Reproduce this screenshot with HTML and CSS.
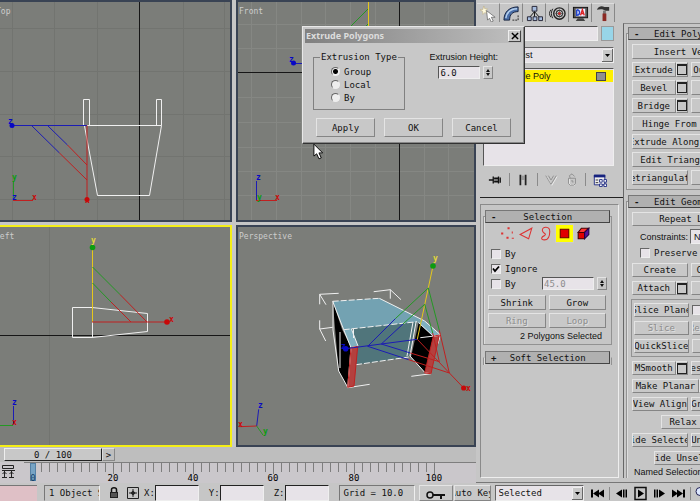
FILE: index.html
```html
<!DOCTYPE html>
<html lang="en">
<head>
<meta charset="UTF-8">
<meta name="viewport" content="width=device-width, initial-scale=1.0">
<title>Extrude Polygons</title>
<link rel="stylesheet" href="styles.css">
</head>

<body>

<div class="app">

<!-- VIEWPORTS -->
<main class="workspace">
<div class="viewports">

<div class="viewport cut">
<svg viewBox="0 2 230 218" preserveAspectRatio="xMidYMid slice">
  <path class="grid" d="M12.5 2V220M54.5 2V220M97.5 2V220M183.5 2V220M224.5 2V220M0 28.5H230M0 71.5H230M0 114.5H230M0 156.5H230M0 199.5H230"/>
  <path class="origin" d="M139.5 2V220"/>
  <text class="view-name" x="-4" y="14">Top</text>
  <path class="wire" d="M83.5 125.5V99.5H89.5V125.5M156.5 125.5V99.5H161.5V125.5M83.5 125.5H161.5L149.5 195.5H97.5L84.5 126"/>
  <path class="blue" d="M12 125.5H87M32 126L59.5 153M48 126L67.5 145"/>
  <path class="red" d="M87 125.5V199M59.5 153L87 180M67.5 145L87 165"/>
  <circle class="blue-dot" cx="12" cy="125.5" r="2.5"/>
  <circle class="red-dot" cx="87" cy="199.5" r="2.5"/>
  <text class="tz" x="8" y="124">z</text>
  <text class="tx" x="85" y="203">x</text>
  <path class="green" d="M13.5 201V182"/>
  <path class="red" d="M13 200.5H33"/>
  <text class="ty" x="12" y="180">y</text>
  <text class="tz" x="12" y="200">z</text>
  <text class="tx" x="32" y="200">x</text>
</svg>
</div>

<div class="viewport">
<svg viewBox="238 2 236 218" preserveAspectRatio="xMidYMid slice">
  <path class="grid light" d="M251.5 2V220M276.5 2V220M301.5 2V220M325.5 2V220M350.5 2V220M375.5 2V220M424.5 2V220M448.5 2V220M238 24.5H474M238 48.5H474M238 97.5H474M238 122.5H474M238 147.5H474M238 171.5H474M238 195.5H474"/>
  <path class="origin" d="M399.5 2V220M238 72.5H474"/>
  <text class="view-name" x="239" y="14">Front</text>
  <path class="yellow" d="M368.5 2V63"/>
  <path class="green" d="M368 9L340 37M368 24L355 37"/>
  <path class="blue" d="M293 63.5H368"/>
  <circle class="blue-dot" cx="293.5" cy="63" r="2.5"/>
  <text class="tz" x="289" y="62">z</text>
  <path class="blue" d="M256.5 201V181"/>
  <path class="red" d="M256 200.5H277"/>
  <text class="tz" x="256" y="180">z</text>
  <text class="ty" x="257" y="200">y</text>
  <text class="tx" x="275" y="200">x</text>
</svg>
</div>

<div class="viewport cut active">
<svg viewBox="0 227 230 218" preserveAspectRatio="xMidYMid slice">
  <path class="grid" d="M49.5 227V445"/>
  <path class="origin" d="M0 335.5H230"/>
  <text class="view-name" x="-5" y="239">Left</text>
  <path class="wire" d="M72.5 307.5H92L147.5 313.5V331.5L92 337.5H72.5ZM92.5 322V337"/>
  <path class="yellow" d="M92.5 247V322"/>
  <path class="green" d="M92.5 267L120 294.5M92.5 283L111 302"/>
  <path class="red" d="M92 322H167M120 294.5L147 322M111 302L131 322"/>
  <circle class="green-dot" cx="92.5" cy="247.5" r="2.8"/>
  <circle class="red-dot" cx="167" cy="322" r="2.8"/>
  <text class="tyy" x="91" y="243">y</text>
  <text class="tx" x="169" y="322">x</text>
  <path class="blue" d="M13.5 425V406"/>
  <path class="green" d="M0 425.5H13"/>
  <text class="tz" x="12" y="405">z</text>
  <text class="tx" x="12" y="425">x</text>
</svg>
</div>

<div class="viewport">
<svg viewBox="238 227 236 218" preserveAspectRatio="xMidYMid slice">
  <text class="view-name" x="239" y="239">Perspective</text>
  <path class="bracket" d="M319.7 304.3V294.3L338.7 293.3M319.7 294.3L326 304.7M373.7 291.7L390.3 289.7V298.7M390.3 289.7L401 299.7M319.7 320.3V329L332.7 327.3M319.7 329L325.7 341M347.7 387.7L369.7 384.3M411.3 376.3L431 373.7"/>
  <path fill="#50757b" d="M343.7 329.7L417 321.7L408.7 357L356 364.7Z"/>
  <path fill="#73a2b2" d="M332.7 301.3L379.3 298.3L424.7 321L343.7 329.7Z"/>
  <path fill="#000" d="M332.7 301.3L342 329.3L351.3 347.7L347.7 387.3L338.7 371ZM418.7 322.7L433.3 336L425.3 373L411 357Z"/>
  <path fill="#7fb0bf" d="M343.7 329.7L351.3 328.7L358 346L351 347.7ZM417 321.7L424.7 321L440.3 334.7L433.3 336.3Z"/>
  <path fill="#b4403e" d="M351 347.7L357.7 346.3L354 386L347.7 387.3ZM433.3 336.3L439.3 335L431 373.7L424.7 373Z"/>
  <path class="edge dash" d="M332.7 301.3L379.3 298.3M343.7 329.7L417 321.7M356 364.7L408.7 357"/>
  <path class="edge" d="M379.3 298.3L424.7 321L440.3 334.7L433.3 336.3L418.7 322.7M332.7 301.3L343.7 329.7L351 347.7L347.7 387.3L338.7 371L333 330V301.3M340 332V368M351.3 328.7L358 346L351 347.7M353.5 329V338M413 322L407 356M416 322L410 356L425.3 373L431 373.7M420.3 337.7L440.3 335.3L438 343.7"/>
  <path class="red" d="M351 347.7L357.7 346.3L354 386L347.7 387.3ZM433.3 336.3L439.3 335L431 373.7L424.7 373Z"/>
  <path class="yellow" d="M417.3 339.3L433 266"/>
  <path class="green" d="M428.3 288L395.3 318.7M424.7 304.3L403 324M428.3 288L439.3 330.3M424.7 304.3L432.7 333"/>
  <path class="blue" d="M417.3 339.3L381.3 344L345.7 348.7M395.3 318.7L367.7 346.3L408.7 359.7M403 324L381.3 344L410.3 353"/>
  <path class="red" d="M417.3 339.3L463.7 388M439.3 330.3L449.3 373L408.7 359.7M432.7 333L439.3 361.7L410.3 353"/>
  <circle class="green-dot" cx="433" cy="266" r="2.8"/>
  <circle class="blue-dot" cx="345.7" cy="348.7" r="2.8"/>
  <circle class="red-dot" cx="463.7" cy="388" r="2.6"/>
  <text class="tyy" x="433" y="261">y</text>
  <text class="tz" x="341" y="349">z</text>
  <text class="tx" x="466" y="391">x</text>
  <path class="blue" d="M256.7 426L258.7 409.3"/>
  <path class="red" d="M256.7 426L239.3 426.7"/>
  <path class="green" d="M256.7 426L263 435"/>
  <text class="tz" x="258" y="408">z</text>
  <text class="tx" x="238" y="427">x</text>
  <text class="ty" x="263" y="434">y</text>
</svg>
</div>

</div>

<div class="time-slider">
  <button class="time-thumb">0 / 100</button>
  <button class="time-next">&gt;</button>
</div>

<div class="timeline">
<svg viewBox="0 0 476 21" preserveAspectRatio="xMinYMid meet">
  <path fill="none" stroke="#222" d="M2.5 3.5H13.5V6.5H2.5ZM2 8.5H15M4.5 9V15M11.5 9V15M2.5 12L4.5 10L6.5 12M9.5 12L11.5 10L13.5 12M2 15.5H7M9 15.5H14"/>
  <path fill="none" stroke="#7e7e7e" d="M24 .5H476M41.5 1V10M49.5 1V10M57.5 1V10M65.5 1V10M73.5 1V10M81.5 1V10M89.5 1V10M97.5 1V10M105.5 1V10M113.5 1V12M121.5 1V10M129.5 1V10M137.5 1V10M145.5 1V10M153.5 1V10M161.5 1V10M169.5 1V10M177.5 1V10M185.5 1V10M193.5 1V12M201.5 1V10M209.5 1V10M217.5 1V10M225.5 1V10M233.5 1V10M241.5 1V10M249.5 1V10M257.5 1V10M265.5 1V10M273.5 1V12M281.5 1V10M289.5 1V10M297.5 1V10M305.5 1V10M313.5 1V10M322.5 1V10M330.5 1V10M338.5 1V10M346.5 1V10M354.5 1V12M362.5 1V10M370.5 1V10M378.5 1V10M386.5 1V10M394.5 1V10M402.5 1V10M410.5 1V10M418.5 1V10M426.5 1V10M434.5 1V12"/>
  <rect x="30.5" y="1.5" width="5" height="17" fill="#76a3c4" stroke="#5480a4"/>
  <text class="tick" x="33" y="19" fill="#17436b">0</text>
  <text class="tick" x="113" y="19">20</text>
  <text class="tick" x="193" y="19">40</text>
  <text class="tick" x="273" y="19">60</text>
  <text class="tick" x="354" y="19">80</text>
  <text class="tick" x="434" y="19">100</text>
</svg>
</div>
</main>

<!-- COMMAND PANEL -->
<aside class="command">

<nav class="tabs">
  <button class="tab" aria-label="Create"><svg viewBox="0 0 18 18"><path d="M4 1L5 4L8 4L6 6L8 9L5 8L3 10L3 7L0 5L3 5Z" fill="#fffbe0" stroke="#bba870" stroke-width=".5"/><path d="M7 6L16 13H12L14 17L12 18L10 14L8 16Z" fill="#fff" stroke="#555" stroke-width=".7"/></svg></button>
  <button class="tab" aria-label="Modify"><svg viewBox="0 0 18 18"><path d="M1 16C1 7 7 2 16 2V7C10 7 7 10 7 16Z" fill="#4a6ea8" stroke="#14213e"/><path d="M3 14C4 8 8 4 15 4" stroke="#b5d0ee" fill="none" stroke-width="1.5"/><path d="M10 16H16V10" stroke="#222" fill="none" stroke-dasharray="2 1"/></svg></button>
  <button class="tab" aria-label="Hierarchy"><svg viewBox="0 0 18 18"><path d="M9 4V14M9 7L3 14M9 7L15 14" stroke="#111"/><path d="M6.5 1.5H11.5V6.5H6.5ZM1.5 12.5H5.5V16.5H1.5ZM7.5 12.5H11.5V16.5H7.5ZM13.5 12.5H17.5V16.5H13.5Z" fill="#a7bddf" stroke="#223"/></svg></button>
  <button class="tab" aria-label="Motion"><svg viewBox="0 0 18 18"><g fill="none" stroke="#222"><circle cx="11" cy="9" r="6" stroke-width="1.5"/><circle cx="11" cy="9" r="3.5" fill="#ccc"/><path d="M11 5V13M7 9H15M8 6L14 12M14 6L8 12" stroke-width=".6"/><path d="M4 4C2 7 2 11 4 14M2 5C0 8 0 10 2 13"/></g><circle cx="11" cy="9" r="1.3" fill="#d22"/></svg></button>
  <button class="tab" aria-label="Display"><svg viewBox="0 0 18 18"><rect x="1.5" y="2.5" width="15" height="11" fill="#555" stroke="#111"/><rect x="4" y="4" width="10" height="8" fill="#eef"/><path d="M5 5V11C9 11 9 5 5 5" fill="none" stroke="#24c" stroke-width="1.5"/><path d="M9 11L11 5L13 11M10 9H13" fill="none" stroke="#d22" stroke-width="1.5"/><path d="M6 14H12L14 17H4Z" fill="#444"/></svg></button>
  <button class="tab" aria-label="Utilities"><svg viewBox="0 0 18 18"><path d="M2 5C4 1 7 1 10 2H15V6H11L9 5C6 4 4 5 2 5Z" fill="#333"/><path d="M8.5 6H11.5V10H8.5Z" fill="#777"/><path d="M8 9H12V17H8Z" fill="#8c2a24"/></svg></button>
</nav>

<div class="columns">

<section class="modify">
  <div class="name-row">
    <input class="field" type="text" aria-label="Object name">
    <button class="swatch" aria-label="Object color"></button>
  </div>
  <select class="combo" aria-label="Modifier List"><option>Modifier List</option></select>
  <div class="stack">
    <div class="stack-item"><span>Editable Poly</span><i class="stack-box"></i></div>
  </div>
  <div class="stack-tools">
    <button aria-label="Pin Stack"><svg viewBox="0 0 16 16"><path d="M1 8H6M6 4V12M7 6H12V10H7M12 4V12M14 5V11" stroke="#111" stroke-width="1.5" fill="#777"/></svg></button>
    <i class="sep"></i>
    <button aria-label="Show end result"><svg viewBox="0 0 16 16"><path d="M5 2V14M11 2V14" stroke="#222" stroke-width="2"/><path d="M7 3V8M9 3V8" stroke="#777"/></svg></button>
    <i class="sep"></i>
    <button aria-label="Make unique"><svg viewBox="0 0 16 16"><path d="M3 4L9 14L15 4" stroke="#eee" fill="none"/><path d="M2 3L8 13L14 3M5 3L8 8L11 3" stroke="#8c8c8c" fill="none"/></svg></button>
    <button aria-label="Remove modifier"><svg viewBox="0 0 16 16"><path d="M5 7V12L7 14H11" stroke="#eee" fill="none"/><path d="M4 6H12V12L10 14H6L4 12ZM6 6L5 3L8 1L11 4M7 9H9V11" stroke="#8c8c8c" fill="none"/></svg></button>
    <i class="sep"></i>
    <button aria-label="Configure sets"><svg viewBox="0 0 16 16"><path d="M1.5 2.5H13.5V13.5H1.5Z" fill="#eee" stroke="#16227f"/><path d="M1 2H14V5H1Z" fill="#16227f"/><path d="M3 8H6M3 11H6" stroke="#222"/><path d="M7.5 7.5H10.5V10.5H7.5ZM12.5 7.5H15.5V10.5H12.5ZM7.5 12.5H10.5V15.5H7.5ZM12.5 12.5H15.5V15.5H12.5Z" fill="#fff" stroke="#16227f"/></svg></button>
  </div>

  <div class="rollouts">
    <section class="rollout">
      <button class="rollout-head"><b>-</b><span>Selection</span></button>
      <div class="sub-objects">
        <button aria-label="Vertex"><svg viewBox="0 0 16 16"><path d="M2 7H4V9H2ZM8 2H10V4H8ZM12 6H13V8H12ZM7 11H9V13H7ZM12 12H14V13H12Z" fill="#d33"/></svg></button>
        <button aria-label="Edge"><svg viewBox="0 0 16 16"><path d="M2 9L13 3L10 13Z" fill="none" stroke="#d33"/></svg></button>
        <button aria-label="Border"><svg viewBox="0 0 16 16"><path d="M5 5C5 1 12 1 12 6C12 11 10 14 7 14C3 14 4 11 7 10C10 8 5 8 5 5Z" fill="none" stroke="#d33"/></svg></button>
        <button class="on" aria-label="Polygon"><svg viewBox="0 0 16 16"><path d="M4 4H12V12H4Z" fill="#e00000" stroke="#600"/></svg></button>
        <button aria-label="Element"><svg viewBox="0 0 16 16"><path d="M3 7H9V13H3Z" fill="#e00000" stroke="#400"/><path d="M3 7L6 3H13L9 7Z" fill="#f33" stroke="#400"/><path d="M9 7L13 3V9L9 13Z" fill="#551299" stroke="#204"/></svg></button>
      </div>
      <label class="check"><input type="checkbox">By</label>
      <label class="check"><input type="checkbox" checked>Ignore</label>
      <div class="angle-row">
        <label class="check"><input type="checkbox">By</label>
        <span class="spinner"><input class="field" type="text" value="45.0" aria-label="Angle" disabled><button class="spin" aria-label="Adjust angle"></button></span>
      </div>
      <div class="pair">
        <button class="btn">Shrink</button>
        <button class="btn">Grow</button>
        <button class="btn" disabled>Ring</button>
        <button class="btn" disabled>Loop</button>
      </div>
      <p class="summary">2 Polygons Selected</p>
    </section>
    <section class="rollout closed">
      <button class="rollout-head"><b>+</b><span>Soft Selection</span></button>
    </section>
  </div>
</section>

<section class="edit">
  <section class="rollout">
    <button class="rollout-head"><b>-</b><span>Edit Polygons</span></button>
    <div class="rows">
      <div class="row"><button class="btn">Insert Vertex</button></div>
      <div class="row two"><span><button class="btn">Extrude</button><button class="btn opt" aria-label="Extrude settings"></button></span><span><button class="btn">Outline</button><button class="btn opt" aria-label="Outline settings"></button></span></div>
      <div class="row two"><span><button class="btn">Bevel</button><button class="btn opt" aria-label="Bevel settings"></button></span><span><button class="btn">Inset</button></span></div>
      <div class="row two"><span><button class="btn">Bridge</button><button class="btn opt" aria-label="Bridge settings"></button></span><span><button class="btn">Flip</button></span></div>
      <div class="row"><button class="btn">Hinge From Edge</button><button class="btn opt" aria-label="Hinge settings"></button></div>
      <div class="row"><button class="btn">Extrude Along Spline</button><button class="btn opt" aria-label="Spline settings"></button></div>
      <div class="row"><button class="btn">Edit Triangulation</button></div>
      <div class="row two"><span><button class="btn">Retriangulate</button></span><span><button class="btn">Turn</button></span></div>
    </div>
  </section>

  <section class="rollout geometry">
    <button class="rollout-head"><b>-</b><span>Edit Geometry</span></button>
    <div class="rows">
      <div class="row"><button class="btn">Repeat Last</button></div>
      <div class="row constraints"><label for="constraints">Constraints:</label><select class="combo" id="constraints"><option>None</option></select></div>
      <div class="row preserve"><label class="check"><input type="checkbox">Preserve UVs</label></div>
      <div class="row two"><span><button class="btn">Create</button></span><span><button class="btn">Collapse</button></span></div>
      <div class="row two"><span><button class="btn">Attach</button><button class="btn opt" aria-label="Attach list"></button></span><span><button class="btn">Detach</button></span></div>
      <div class="slice">
        <div class="row two"><span><button class="btn">Slice Plane</button></span><label class="check"><input type="checkbox">Split</label></div>
        <div class="row two"><span><button class="btn" disabled>Slice</button></span><span><button class="btn" disabled>Reset Plane</button></span></div>
        <div class="row two"><span><button class="btn">QuickSlice</button></span><span><button class="btn">Cut</button></span></div>
      </div>
      <div class="row two"><span><button class="btn">MSmooth</button><button class="btn opt" aria-label="MSmooth settings"></button></span><span><button class="btn">Tessellate</button><button class="btn opt" aria-label="Tessellate settings"></button></span></div>
      <div class="row planar"><button class="btn">Make Planar</button><button class="btn">X</button><button class="btn">Y</button><button class="btn">Z</button></div>
      <div class="row two"><span><button class="btn">View Align</button></span><span><button class="btn">Grid Align</button></span></div>
      <div class="row relax"><button class="btn">Relax</button><button class="btn opt" aria-label="Relax settings"></button></div>
      <div class="row two"><span><button class="btn">Hide Selected</button></span><span><button class="btn">Unhide All</button></span></div>
      <div class="row unselected"><button class="btn">Hide Unselected</button></div>
      <p class="named">Named Selections:</p>
    </div>
  </section>
</section>

</div>
</aside>

<!-- STATUS BAR -->
<footer class="status">
  <div class="listener"></div>
  <output class="prompt">1 Object Selected</output>
  <button class="icon lock" aria-label="Lock selection"><svg viewBox="0 0 12 14"><path d="M3.5 7V3.5C3.5 1 8.5 1 8.5 3.5V7" fill="none" stroke="#111" stroke-width="1.5"/><path d="M2 6H10V12H2Z" fill="#222"/><path d="M3 8H9M3 10H9" stroke="#888"/></svg></button>
  <button class="icon" aria-label="Transform type-in"><svg viewBox="0 0 14 14"><path d="M1.5 1.5H12.5V12.5H1.5ZM7 3V11M3 7H11" fill="none" stroke="#222"/><path d="M7 4.5L9.5 7L7 9.5L4.5 7Z" fill="#222"/></svg></button>
  <label class="coord">X:<input class="field" type="text"></label>
  <label class="coord">Y:<input class="field" type="text"></label>
  <label class="coord">Z:<input class="field" type="text"></label>
  <output class="grid-size">Grid = 10.0</output>
  <button class="btn key" aria-label="Set keys"><svg viewBox="0 0 22 12"><path d="M8 8H20M16 8V12" stroke="#111" stroke-width="2"/><circle cx="5" cy="8" r="3" fill="none" stroke="#111" stroke-width="1.5"/></svg></button>
  <button class="btn auto">Auto Key</button>
  <select class="combo" aria-label="Key filter"><option>Selected</option></select>
  <div class="playback">
    <button aria-label="Go to start"><svg viewBox="0 0 15 12"><path d="M1 2H3V10H1ZM9 2V10L3 6ZM14 2V10L8 6Z"/></svg></button>
    <i class="sep"></i>
    <button aria-label="Previous frame"><svg viewBox="0 0 15 12"><path d="M8 2V10L2 6ZM9 2H10.5V10H9ZM11.5 2H13V10H11.5Z"/></svg></button>
    <button aria-label="Play"><svg viewBox="0 0 15 15"><path d="M2 1.5H13V13.5H2Z" fill="none" stroke="#111" stroke-width="1.5"/><path d="M5 3.5L11 7.5L5 11.5Z"/></svg></button>
    <button aria-label="Next frame"><svg viewBox="0 0 15 12"><path d="M2 2H3.5V10H2ZM4.5 2H6V10H4.5ZM7 2L13 6L7 10Z"/></svg></button>
    <button aria-label="Go to end"><svg viewBox="0 0 15 12"><path d="M1 2L7 6L1 10ZM6 2L12 6L6 10ZM12 2H14V10H12Z"/></svg></button>
    <i class="sep"></i>
    <button aria-label="Zoom"><svg viewBox="0 0 15 14"><circle cx="5" cy="5" r="4" fill="#dde8ff" stroke="#225"/><path d="M8 8L13 13" stroke="#225" stroke-width="2"/></svg></button>
  </div>
</footer>

</div>

<!-- EXTRUDE DIALOG -->
<div class="dialog" role="dialog" aria-labelledby="dialogTitle">
  <div class="title-bar"><h1 id="dialogTitle">Extrude Polygons</h1><button class="close" aria-label="Close"><svg viewBox="0 0 9 9"><path d="M1 1L8 8M8 1L1 8" stroke="#000" stroke-width="1.6"/></svg></button></div>
  <div class="dialog-body">
    <fieldset>
      <legend>Extrusion Type</legend>
      <label><input type="radio" name="type" checked>Group</label>
      <label><input type="radio" name="type">Local</label>
      <label><input type="radio" name="type">By</label>
    </fieldset>
    <div class="height-field">
      <label for="height">Extrusion Height:</label>
      <span class="spinner"><input class="field" type="text" id="height" value="6.0"><button class="spin" aria-label="Adjust height"></button></span>
    </div>
  </div>
  <div class="dialog-buttons">
    <button class="btn">Apply</button>
    <button class="btn">OK</button>
    <button class="btn">Cancel</button>
  </div>
</div>

<svg class="cursor" viewBox="0 0 12 18"><path d="M1 1V14L4 11.5L6.5 17L9 16L6.5 10.5H10.5Z" fill="#fff" stroke="#000"/></svg>

</body>
</html>
```
FILE: styles.css
```css
*{
    box-sizing:border-box;
}

body{
    margin:0;
    background:#c6c6c6;
    color:#111;
    overflow:hidden;
    font:9px/12px "DejaVu Sans Mono", monospace;
}

button, input, select{
    font:inherit;
    color:inherit;
    margin:0;
    padding:0;
    border:0;
    border-radius:0;
    background:none;
    appearance:none;
}

svg{
    display:block;
}

p{
    margin:0;
}

.app{
    display:grid;
    grid-template-columns:minmax(0,1fr) 224px;
    grid-template-rows:minmax(0,1fr) 18px;
    height:100vh;
}

/* SHARED CONTROLS */
.btn{
    display:flex;
    flex:1;
    min-width:0;
    align-items:center;
    justify-content:center;
    overflow:hidden;
    white-space:nowrap;
    border:1px solid;
    border-color:#e4e4e4 #858585 #858585 #e4e4e4;
    background:#c8c8c8;
}

.btn:disabled{
    color:#8c8c8c;
    text-shadow:1px 1px #e0e0e0;
}

.opt{
    flex:0 0 12px;
}

.opt::before{
    content:"";
    width:8px;
    height:8px;
    border:1px solid #222;
    border-top-width:2px;
}

.field{
    min-width:0;
    background:#e7e3e8;
    border:1px solid;
    border-color:#555 #eee #eee #555;
}

.field:disabled{
    color:#8c8c8c;
}

.combo{
    padding-left:3px;
    border:1px solid;
    border-color:#666 #eee #eee #666;
    background:#e7e3e8 url("data:image/svg+xml,%3Csvg xmlns='http://www.w3.org/2000/svg' width='11' height='13'%3E%3Cpath d='M0 0H11V13H0Z' fill='%23c8c8c8'/%3E%3Cpath d='M.5 13V.5H11' fill='none' stroke='%23eee'/%3E%3Cpath d='M0 12.5H10.5V0' fill='none' stroke='%23666'/%3E%3Cpath d='M3 5H8L5.5 8Z'/%3E%3C/svg%3E") no-repeat right center;
}

.sep{
    width:1px;
    height:13px;
    background:#8a8a8a;
}

.spinner{
    display:flex;
    gap:3px;
}

.spin{
    display:flex;
    flex:none;
    flex-direction:column;
    align-items:center;
    justify-content:space-evenly;
    width:10px;
    height:13px;
    border:1px solid;
    border-color:#e4e4e4 #858585 #858585 #e4e4e4;
}

.spin::before, .spin::after{
    content:"";
    border:2px solid transparent;
    border-top-width:0;
    border-bottom:3px solid #111;
}

.spin::after{
    transform:rotate(180deg);
}

.check{
    display:flex;
    align-items:center;
    gap:4px;
    white-space:nowrap;
}

.check input{
    flex:none;
    width:10px;
    height:10px;
    background:#e7e3e8;
    border:1px solid;
    border-color:#666 #eee #eee #666;
}

.check input:checked{
    background:#e7e3e8 url("data:image/svg+xml,%3Csvg xmlns='http://www.w3.org/2000/svg' width='8' height='8'%3E%3Cpath d='M1 3.5L3 6L7 1.5' fill='none' stroke='%23000' stroke-width='1.8'/%3E%3C/svg%3E") center no-repeat;
}

/* VIEWPORTS */
.workspace{
    display:flex;
    flex-direction:column;
    min-height:0;
}

.viewports{
    flex:1;
    min-height:0;
    display:grid;
    grid-template-columns:232fr 240fr;
    grid-template-rows:minmax(0,1fr) minmax(0,1fr);
    gap:3px 4px;
}

.viewport{
    min-width:0;
    border:2px solid #394354;
    background:#7b7d79;
}

.viewport.cut{
    border-left:0;
}

.viewport.active{
    border-color:#f4ee17;
}

.viewport svg{
    width:100%;
    height:100%;
}

.viewport text{
    font-size:8px;
    font-weight:bold;
}

.viewport .view-name{
    fill:#cdcdcd;
    font-weight:normal;
}

.grid{stroke:#727470;}
.grid.light{stroke:#858783;}
.origin{stroke:#161616;}
.wire, .bracket, .edge{fill:none; stroke:#f0f0f0;}
.dash{stroke-dasharray:6 2;}
.red{fill:none; stroke:#c02020;}
.green{fill:none; stroke:#249824;}
.blue{fill:none; stroke:#1c1cb4;}
.yellow{fill:none; stroke:#e6c81c;}
.red-dot, .tx{fill:#c80808;}
.green-dot, .ty{fill:#0c9c10;}
.blue-dot, .tz{fill:#0808c4;}
.tyy{fill:#e2d83a;}

/* TIME */
.time-slider{
    display:flex;
    height:15px;
    padding:1px 0 1px 4px;
    background:#bebebe;
}

.time-thumb{
    width:98px;
    background:#c8c8c8;
    border:1px solid;
    border-color:#eee #222 #222 #eee;
}

.time-next{
    width:13px;
    border:1px solid;
    border-color:#ddd #888 #888 #ddd;
}

.timeline{
    height:21px;
    background:#cac7cb;
}

.timeline svg{
    height:21px;
}

.tick{
    font-size:9px;
    text-anchor:middle;
}

/* COMMAND PANEL */
.command{
    display:flex;
    flex-direction:column;
    min-width:0;
    min-height:0;
    overflow:hidden;
    border-bottom:1px solid #777;
}

.tabs{
    display:flex;
    height:23px;
    padding:3px 0 1px 1px;
}

.tab{
    display:flex;
    align-items:center;
    justify-content:center;
    width:23px;
    border-right:1px solid #888;
    border-top:1px solid #ddd;
}

.tab svg{
    width:17px;
    height:17px;
}

.columns{
    flex:1;
    min-height:0;
    display:grid;
    grid-template-columns:147px minmax(0,1fr);
    padding-bottom:4px;
}

.modify{
    display:flex;
    flex-direction:column;
    min-height:0;
    padding:3px 0 0 4px;
}

.name-row{
    display:flex;
    gap:3px;
    height:15px;
    margin:0 9px 6px 3px;
}

.name-row .field{
    flex:1;
}

.swatch{
    width:13px;
    background:#98d5e8;
    border:1px solid #999;
}

.modify .combo{
    height:16px;
    margin:0 9px 5px 3px;
    padding-left:0;
    font:9px/12px "Liberation Sans", sans-serif;
}

.stack{
    height:98px;
    margin:0 9px 0 3px;
    padding-top:1px;
    background:#e7e3e8;
    border:1px solid;
    border-color:#555 #eee #eee #555;
}

.stack-item{
    display:flex;
    align-items:center;
    justify-content:space-between;
    height:12px;
    padding:0 7px 0 14px;
    background:#fff000;
    font:9px/12px "Liberation Sans", sans-serif;
}

.stack-box{
    width:10px;
    height:9px;
    background:#909090;
    border:1px solid #444;
}

.stack-tools{
    display:flex;
    align-items:center;
    justify-content:space-between;
    height:32px;
    padding:0 16px 4px 8px;
    border-bottom:1px solid #222;
}

.stack-tools svg{
    width:14px;
    height:14px;
}

.rollouts{
    flex:1;
    min-height:0;
    margin:6px 4px 0 0;
    padding:11px 6px 0 2px;
    border:1px solid;
    border-color:#8a8a8a #eee #eee #8a8a8a;
}

.rollout{
    border:1px solid #929292;
    box-shadow:inset 1px 0 #ddd;
}

.rollout-head{
    display:flex;
    align-items:center;
    width:calc(100% - 2px);
    height:13px;
    margin:-7px 1px 0;
    padding:0 5px;
    background:#b0b0b0;
    border:1px solid #555;
    border-color:#777 #444 #444 #777;
}

.rollout-head span{
    flex:1;
    padding-right:5px;
}

.rollout.closed{
    margin-top:12px;
    height:8px;
    border-top-color:transparent;
    border-bottom:0;
}

.sub-objects{
    display:flex;
    justify-content:center;
    padding:1px 5px 3px 0;
}

.sub-objects button{
    width:19px;
    height:19px;
    padding:1px;
}

.sub-objects .on{
    background:#ffff00;
    border:1px solid #ccc;
    padding:0;
}

.modify .check{
    height:15px;
    padding-left:7px;
}

.angle-row{
    display:flex;
    justify-content:space-between;
    align-items:center;
    padding-right:4px;
}

.spinner .field{
    height:13px;
    padding-left:1px;
}

.angle-row .field{
    width:52px;
}

.pair{
    display:grid;
    grid-template-columns:1fr 1fr;
    gap:3px;
    padding:4px 5px 0 4px;
}

.pair .btn{
    height:15px;
}

.summary{
    padding:2px 9px 2px 0;
    text-align:right;
    font:9px/12px "Liberation Sans", sans-serif;
}

/* second column, wider than the space it gets */
.edit{
    min-height:0;
    overflow:hidden;
    padding:9px 0 0 2px;
    border-left:1px solid #666;
    border-top:1px solid #888;
}

.edit .rollout{
    width:126px;
}

.edit .geometry{
    margin-top:11px;
    border-bottom:0;
}

.rows{
    display:flex;
    flex-direction:column;
    gap:3px;
    padding:4px 5px;
}

.geometry .rows{
    gap:4px;
}

.row{
    display:flex;
    height:15px;
}

.geometry .row{
    height:14px;
}

.row.two{
    display:grid;
    grid-template-columns:minmax(0,1fr) minmax(0,1fr);
    gap:3px;
}

.row.two span{
    display:flex;
    min-width:0;
}

.geometry .constraints{
    height:13px;
    align-items:center;
    justify-content:space-between;
    padding-left:8px;
    font:9px/12px "Liberation Sans", sans-serif;
}

.constraints .combo{
    width:56px;
    height:15px;
}

.geometry .preserve{
    height:12px;
    padding-left:8px;
}

.slice{
    display:flex;
    flex-direction:column;
    gap:4px;
    margin:0 -1px;
    padding:3px 0 3px 2px;
    border:1px solid #929292;
}

.planar .btn:first-child{
    flex:0 0 67px;
}

.geometry .relax{
    padding:0 29px;
}

.geometry .unselected{
    padding:0 22px;
}

.geometry .unselected .btn{
    flex:0 0 72px;
}

.named{
    margin-top:-3px;
    padding-left:2px;
    font:9px/12px "Liberation Sans", sans-serif;
}

/* STATUS BAR */
.status{
    grid-column:1 / -1;
    display:flex;
    align-items:stretch;
    gap:4px;
    padding-top:2px;
    white-space:nowrap;
    overflow:hidden;
}

.status > *{
    flex:none;
}

.listener{
    width:37px;
    background:#dfc0c6;
    border-top:1px solid #777;
}

.prompt, .grid-size{
    overflow:hidden;
    padding:1px 4px;
    border:1px solid;
    border-color:#777 #eee transparent #777;
}

.prompt{
    width:56px;
    margin-left:3px;
}

.icon{
    width:14px;
}

.icon svg{
    width:14px;
    height:14px;
}

.lock{
    margin:0 1px 0 3px;
}

.coord{
    display:flex;
    align-items:center;
    margin-right:6px;
}

.coord .field{
    width:44px;
    height:100%;
    border-top-color:#222;
    border-left-color:#222;
}

.grid-size{
    width:76px;
}

.key{
    width:34px;
}

.key svg{
    width:22px;
    height:12px;
}

.auto{
    width:37px;
    margin-left:-3px;
}

.status .combo{
    width:89px;
}

.status .playback{
    flex:1;
    display:flex;
    align-items:center;
    gap:4px;
    padding-left:2px;
}

.playback svg{
    width:15px;
    height:15px;
}

/* DIALOG */
.dialog{
    position:absolute;
    left:302px;
    top:26px;
    width:223px;
    padding:2px;
    background:#c8c8c8;
    border:1px solid;
    border-color:#e8e8e8 #333 #333 #e8e8e8;
    box-shadow:inset -1px -1px #888;
}

.title-bar{
    display:flex;
    align-items:center;
    justify-content:space-between;
    height:14px;
    padding:0 1px;
    background:linear-gradient(to right, #808080, #c0c0c0);
}

.title-bar h1{
    margin:0;
    color:#dcdcdc;
    font:bold 9px/12px "Noto Sans", sans-serif;
}

.close{
    display:flex;
    align-items:center;
    justify-content:center;
    width:13px;
    height:12px;
    background:#c8c8c8;
    border:1px solid;
    border-color:#eee #444 #444 #eee;
}

.close svg{
    width:8px;
    height:8px;
}

.dialog-body{
    display:flex;
    justify-content:space-between;
    padding:8px 24px 0 8px;
}

fieldset{
    width:92px;
    margin:0;
    padding:2px 0 5px 17px;
    border:1px solid #808080;
}

legend{
    margin-left:-11px;
    padding:0 1px;
}

fieldset label{
    display:flex;
    align-items:center;
    gap:4px;
    height:13px;
}

fieldset input{
    width:9px;
    height:9px;
    border-radius:50%;
    background:#eee;
    border:1px solid;
    border-color:#666 #eee #eee #666;
}

fieldset input:checked{
    background:radial-gradient(circle, #000 0 2px, #eee 3px);
}

.height-field label{
    display:block;
    font:9px/12px "Liberation Sans", sans-serif;
}

.height-field .spinner{
    padding:3px 0 0 9px;
}

.height-field .field{
    width:42px;
}

.dialog-buttons{
    display:flex;
    gap:9px;
    padding:8px 11px 4px;
}

.dialog-buttons .btn{
    height:19px;
}

.cursor{
    position:absolute;
    left:313px;
    top:143px;
    width:11px;
    height:17px;
}
```
